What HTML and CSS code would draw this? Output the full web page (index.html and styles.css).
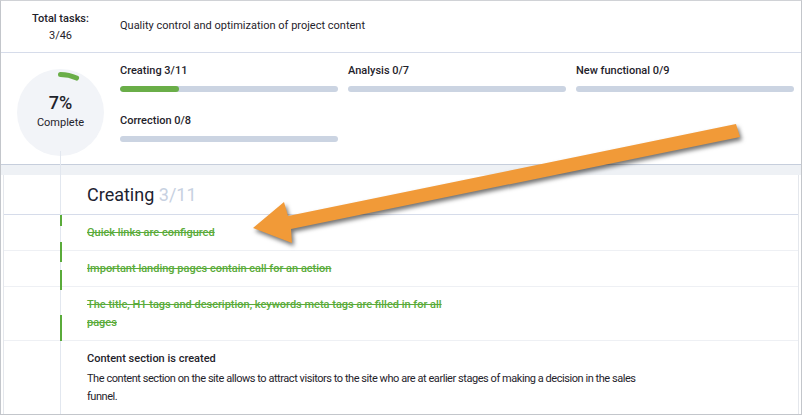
FILE: index.html
```html
<!DOCTYPE html>
<html>
<head>
<meta charset="utf-8">
<link rel="stylesheet" href="styles.css">
</head>
<body>
<div class="frame">
  <header class="head">
    <div class="total">
      <div class="total-label">Total tasks:</div>
      <div class="total-num">3/46</div>
    </div>
    <div class="project">Quality control and optimization of project content</div>
  </header>

  <section class="progress">
    <div class="ring">
      <svg class="ring-svg" width="87" height="87" viewBox="0 0 87 87">
        <circle cx="43.5" cy="43.5" r="43.5" fill="#f2f4f8"/>
        <path d="M43.5 5.5 A38 38 0 0 1 59.56 9.06" fill="none" stroke="#6aae48" stroke-width="5" stroke-linecap="round"/>
      </svg>
      <div class="ring-text">
        <div class="pct">7%</div>
        <div class="pct-label">Complete</div>
      </div>
    </div>
    <div class="stages">
      <div class="stage">
        <div class="stage-label">Creating 3/11</div>
        <div class="bar"><div class="fill" style="width:27%"></div></div>
      </div>
      <div class="stage">
        <div class="stage-label">Analysis 0/7</div>
        <div class="bar"></div>
      </div>
      <div class="stage">
        <div class="stage-label">New functional 0/9</div>
        <div class="bar"></div>
      </div>
      <div class="stage">
        <div class="stage-label">Correction 0/8</div>
        <div class="bar"></div>
      </div>
    </div>
  </section>

  <div class="band"></div>

  <section class="card">
    <h2 class="card-title">Creating <span class="muted">3/11</span></h2>
    <div class="item done"><div class="item-title">Quick links are configured</div></div>
    <div class="item done"><div class="item-title">Important landing pages contain call for an action</div></div>
    <div class="item done"><div class="item-title">The title, H1 tags and description, keywords meta tags are filled in for all pages</div></div>
    <div class="item">
      <div class="item-title">Content section is created</div>
      <div class="item-desc">The content section on the site allows to attract visitors to the site who are at earlier stages of making a decision in the sales funnel.</div>
    </div>
  </section>

  <div class="stem"></div>
  <div class="tick t1"></div>
  <div class="tick t2"></div>
  <div class="tick t3"></div>
  <div class="tick t4"></div>

  <svg class="arrow" width="802" height="415" viewBox="0 0 802 415">
    <polygon points="736,124 740,137 291,229 292,243 253,228 284,202 288,216" fill="#f19a38"/>
  </svg>
</div>
</body>
</html>
```

FILE: styles.css
```css
* { box-sizing: border-box; }
html, body { margin: 0; padding: 0; background: #fff; }
body { font-family: Roboto, "Noto Sans", Arial, sans-serif; color: #1f232b; }

.frame {
  position: relative;
  width: 802px;
  height: 415px;
  border: 1px solid #c3c6cb;
  border-top-color: #d0d2d6;
  overflow: hidden;
  background: #fff;
}

.head {
  display: flex;
  align-items: center;
  height: 52px;
  border-bottom: 1px solid #d6dcea;
}
.total {
  width: 119px;
  text-align: center;
  font-size: 11px;
  line-height: 17px;
}
.total-label { font-weight: 500; }
.project { font-size: 11px; line-height: 16px; padding-bottom: 1px; }

.progress {
  display: flex;
  height: 111px;
  padding-top: 10px;
}
.ring {
  position: relative;
  width: 87px;
  height: 87px;
  margin: 6px 0 0 16px;
  flex: none;
}
.ring-svg { display: block; }
.ring-text {
  position: absolute;
  left: 0; right: 0; top: 23px;
  text-align: center;
}
.pct { font-size: 18px; line-height: 22px; font-weight: 500; }
.pct-label { font-size: 11px; line-height: 16px; margin-top: 1px; }

.stages {
  margin-left: 16px;
  display: grid;
  grid-template-columns: 218px 218px 218px;
  column-gap: 10px;
  row-gap: 21px;
  align-content: start;
}
.stage-label { font-size: 11px; line-height: 16px; font-weight: 500; }
.bar {
  margin-top: 7px;
  height: 6px;
  border-radius: 3px;
  background: #cbd4e2;
  overflow: hidden;
}
.fill { height: 100%; background: #6aae48; border-radius: 3px; }

.band {
  height: 11px;
  border-top: 1px solid #c6cedc;
  background: #eef1f5;
}

.card {
  margin: 0 2px;
  border-left: 1px solid #e4e7ec;
  border-right: 1px solid #e4e7ec;
}
.card-title {
  margin: 0;
  height: 40px;
  padding: 8px 0 0 83px;
  font-size: 18px;
  line-height: 24px;
  font-weight: 400;
  color: #1d2230;
  border-bottom: 1px solid #d6dcea;
}
.muted { color: #c7d1e1; }

.item {
  padding: 9px 0 8px 83px;
  border-bottom: 1px solid #eef0f4;
}
.item-title {
  font-size: 11px;
  line-height: 18px;
  font-weight: 500;
  max-width: 362px;
}
.item.done .item-title {
  color: #5aab3a;
  text-decoration: line-through;
}
.item-desc {
  margin-top: 2px;
  font-size: 11px;
  line-height: 18px;
  letter-spacing: -0.45px;
  max-width: 565px;
}

.stem {
  position: absolute;
  left: 59px;
  top: 150px;
  bottom: 0;
  width: 1px;
  background: #e2e7ef;
}
.tick {
  position: absolute;
  left: 59px;
  width: 2px;
  background: #5aab3a;
}
.t1 { top: 214px; height: 11px; }
.t2 { top: 241px; height: 20px; }
.t3 { top: 269px; height: 20px; }
.t4 { top: 314px; height: 26px; }

.arrow {
  position: absolute;
  left: -1px;
  top: -1px;
  filter: drop-shadow(2px 3px 2px rgba(0, 0, 0, 0.55));
}
```
